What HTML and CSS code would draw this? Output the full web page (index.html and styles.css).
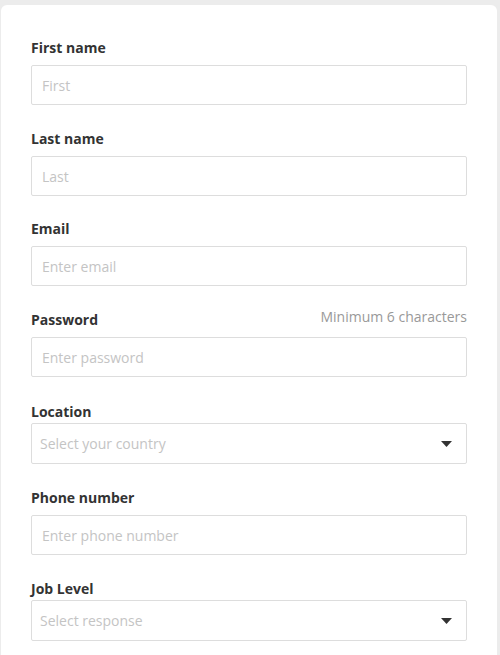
FILE: index.html
```html
<!DOCTYPE html>
<html lang="en">
<head>
  <meta charset="UTF-8" />
  <meta name="viewport" content="width=device-width, initial-scale=1.0"/>
  <title>Sign up</title>
  <link rel="stylesheet" href="styles.css">
</head>
<body>
  <form class="card">
    <div class="field">
      <label for="first">First name</label>
      <input id="first" type="text" placeholder="First" />
    </div>
    <div class="field field-tight">
      <label for="last">Last name</label>
      <input id="last" type="text" placeholder="Last" />
    </div>
    <div class="field">
      <label for="email">Email</label>
      <input id="email" type="email" placeholder="Enter email" />
    </div>
    <div class="field field-loose">
      <div class="label-row">
        <label for="password">Password</label>
        <span class="hint">Minimum 6 characters</span>
      </div>
      <input id="password" type="password" placeholder="Enter password" />
    </div>
    <div class="field field-select">
      <label>Location</label>
      <div class="select">
        <span>Select your country</span>
        <svg width="11" height="6" viewBox="0 0 11 6"><path d="M0 0h11L5.5 6z" fill="#333"/></svg>
      </div>
    </div>
    <div class="field">
      <label for="phone">Phone number</label>
      <input id="phone" type="tel" placeholder="Enter phone number" />
    </div>
    <div class="field field-select">
      <label>Job Level</label>
      <div class="select">
        <span>Select response</span>
        <svg width="11" height="6" viewBox="0 0 11 6"><path d="M0 0h11L5.5 6z" fill="#333"/></svg>
      </div>
    </div>
  </form>
</body>
</html>
```

FILE: styles.css
```css
body { margin: 0; background: #ececec; font-family: "Open Sans", Arial, sans-serif; }
.card { box-sizing: border-box; background: #fff; margin: 5px 3px 0 1px; border-radius: 6px 6px 0 0; padding: 34px 30px 0; height: 650px; }
.field { display: flex; flex-direction: column; margin-bottom: 25px; }
.field:last-child { margin-bottom: 0; }
.field-tight { margin-bottom: 24px; }
.field-loose { margin-bottom: 26px; }
.field label { font-size: 14px; font-weight: 700; color: #333; line-height: 18px; margin-bottom: 8px; }
.field-select label { margin-bottom: 2px; }
.label-row { display: flex; justify-content: space-between; align-items: flex-start; }
.hint { font-size: 14px; color: #999; line-height: 18px; margin-top: -3px; }
.field input { box-sizing: border-box; height: 40px; border: 1px solid #ddd; border-radius: 2px; padding: 0 10px; font: 14px "Open Sans", Arial, sans-serif; color: #333; outline: none; }
.field input::placeholder { color: #c4c4c4; }
.select { box-sizing: border-box; height: 41px; border: 1px solid #ddd; border-radius: 2px; padding: 0 14px 0 8px; display: flex; align-items: center; justify-content: space-between; font-size: 14px; color: #c4c4c4; }
```
